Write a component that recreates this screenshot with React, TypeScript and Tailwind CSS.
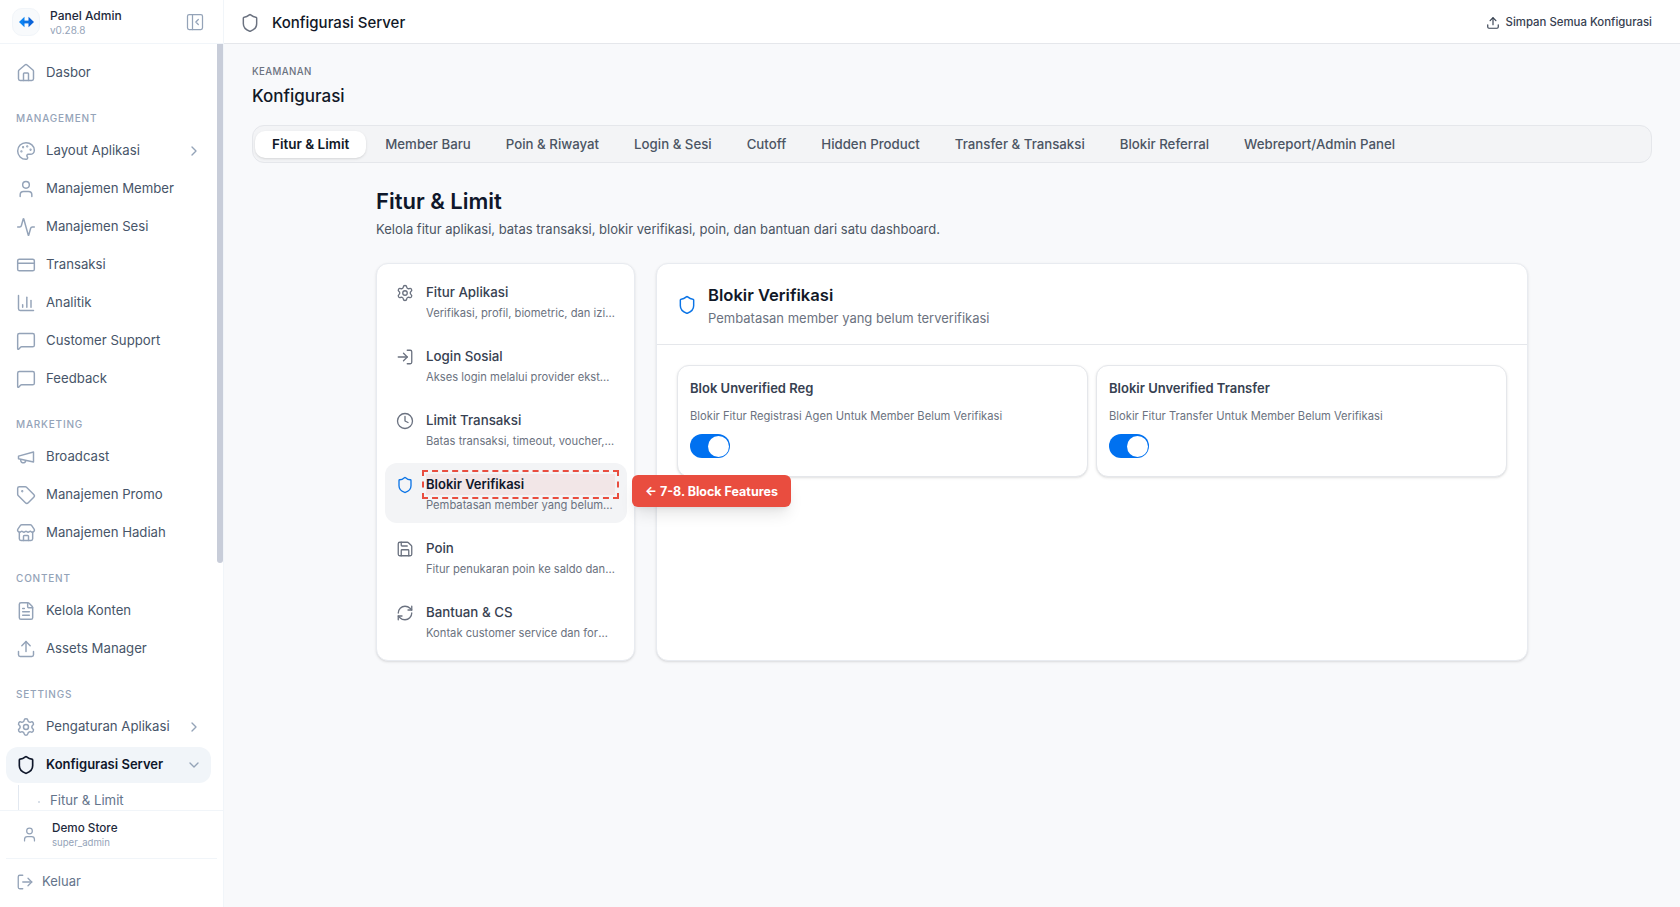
import {
  Activity,
  ChartColumn,
  ChevronDown,
  ChevronRight,
  Clock,
  CreditCard,
  FileText,
  House,
  LogIn,
  LogOut,
  MessageSquare,
  Palette,
  PanelLeftClose,
  RefreshCw,
  Save,
  Settings,
  Shield,
  Store,
  Tag,
  Upload,
  User,
} from "lucide-react";

const font = { fontFamily: "Inter, 'Noto Sans', sans-serif" };

function Megaphone({ size = 20, strokeWidth = 2, className }: { size?: number; strokeWidth?: number; className?: string }) {
  return (
    <svg width={size} height={size} viewBox="0 0 24 24" fill="none" stroke="currentColor" strokeWidth={strokeWidth} strokeLinecap="round" strokeLinejoin="round" className={className}>
      <path d="m3 11 18-5v12L3 14v-3z" />
      <path d="M11.6 16.8a3 3 0 1 1-5.8-1.6" />
    </svg>
  );
}

function NavItem({ icon: Icon, label, chevron }: { icon: any; label: string; chevron?: boolean }) {
  return (
    <div className="flex h-9 items-center gap-[10px] rounded-xl pl-[10px] pr-[9px] text-[13.2px] text-[#475569]">
      <Icon size={20} strokeWidth={1.75} className="shrink-0 text-[#94a3b8]" />
      <span className="flex-1 truncate">{label}</span>
      {chevron && <ChevronRight size={16} className="text-[#94a3b8]" />}
    </div>
  );
}

function NavSection({ title, children }: { title: string; children: React.ReactNode }) {
  return (
    <div className="pt-[19px]">
      <div className="mb-[7px] flex h-4 items-center px-[10px] text-[10px] font-medium tracking-[0.08em] text-[#94a3b8]">{title}</div>
      <div className="flex flex-col gap-[2px]">{children}</div>
    </div>
  );
}

function Sidebar() {
  return (
    <aside className="flex h-full w-[224px] shrink-0 flex-col border-r border-[#f1f5f9] bg-white">
      <div className="flex h-[44px] shrink-0 items-center border-b border-[#f1f5f9] pl-[12px] pr-[18px] pt-[1px]">
        <div className="flex h-7 w-7 items-center justify-center rounded-[10px] border border-[#f1f5f9] bg-[#f8fafc]">
          <svg width="15" height="12" viewBox="0 0 15 12" fill="none">
            <path d="M0 6 L5.5 0.8 V11.2 Z" fill="#0b84f3" />
            <path d="M15 6 L9.5 0.8 V11.2 Z" fill="#0b63d8" />
            <rect x="4" y="4.6" width="7" height="2.8" fill="#0b74e6" />
          </svg>
        </div>
        <div className="ml-[10px] flex-1 pt-[2px] leading-none">
          <div className="text-[12px] font-medium leading-[14px] text-[#1e293b]">Panel Admin</div>
          <div className="text-[10px] leading-[14px] text-[#94a3b8]">v0.28.8</div>
        </div>
        <PanelLeftClose size={20} strokeWidth={1.5} className="text-[#94a3b8]" />
      </div>

      <div className="relative min-h-0 flex-1 overflow-hidden">
        <div className="px-[6px] pt-[11px] pr-[12px]">
          <NavItem icon={House} label="Dasbor" />
          <NavSection title="MANAGEMENT">
            <NavItem icon={Palette} label="Layout Aplikasi" chevron />
            <NavItem icon={User} label="Manajemen Member" />
            <NavItem icon={Activity} label="Manajemen Sesi" />
            <NavItem icon={CreditCard} label="Transaksi" />
            <NavItem icon={ChartColumn} label="Analitik" />
            <NavItem icon={MessageSquare} label="Customer Support" />
            <NavItem icon={MessageSquare} label="Feedback" />
          </NavSection>
          <NavSection title="MARKETING">
            <NavItem icon={Megaphone} label="Broadcast" />
            <NavItem icon={Tag} label="Manajemen Promo" />
            <NavItem icon={Store} label="Manajemen Hadiah" />
          </NavSection>
          <NavSection title="CONTENT">
            <NavItem icon={FileText} label="Kelola Konten" />
            <NavItem icon={Upload} label="Assets Manager" />
          </NavSection>
          <NavSection title="SETTINGS">
            <NavItem icon={Settings} label="Pengaturan Aplikasi" chevron />
            <div className="flex h-9 items-center gap-[10px] rounded-xl bg-[#f1f5f9] pl-[10px] pr-[9px] text-[13px] font-semibold text-[#0f172a]">
              <Shield size={20} strokeWidth={2} className="shrink-0" />
              <span className="flex-1 truncate">Konfigurasi Server</span>
              <ChevronDown size={16} className="text-[#94a3b8]" />
            </div>
            <div className="ml-[12px] flex h-[32px] items-center border-l border-[#e2e8f0] pl-[31px] text-[13.2px] text-[#64748b]">
              <span className="relative">
                <span className="absolute -left-[12px] top-1/2 h-[2px] w-[2px] rounded-full bg-[#cbd5e1]" />
                Fitur &amp; Limit
              </span>
            </div>
          </NavSection>
        </div>
        <div className="absolute right-0 top-0 h-[519px] w-[6px] rounded-b-full bg-[#c8cdd9]" />
      </div>

      <div className="shrink-0 border-t border-[#f1f5f9] bg-white pb-[3px]">
        <div className="flex h-[47px] items-center pl-[21px]">
          <User size={17} strokeWidth={1.75} className="text-[#94a3b8]" />
          <div className="ml-[14px]">
            <div className="text-[11.7px] font-medium leading-[16px] text-[#1e293b]">Demo Store</div>
            <div className="text-[9.6px] leading-[14px] text-[#94a3b8]">super_admin</div>
          </div>
        </div>
        <div className="mx-[6px] flex h-[46px] items-center gap-[8px] border-t border-[#f1f5f9] pl-[10px] text-[13px] text-[#64748b]">
          <LogOut size={18} strokeWidth={1.75} className="text-[#94a3b8]" />
          Keluar
        </div>
      </div>
    </aside>
  );
}

const tabs = ["Member Baru", "Poin & Riwayat", "Login & Sesi", "Cutoff", "Hidden Product", "Transfer & Transaksi", "Blokir Referral", "Webreport/Admin Panel"];

const menu = [
  { icon: Settings, title: "Fitur Aplikasi", sub: "Verifikasi, profil, biometric, dan izin aplikasi" },
  { icon: LogIn, title: "Login Sosial", sub: "Akses login melalui provider eksternal" },
  { icon: Clock, title: "Limit Transaksi", sub: "Batas transaksi, timeout, voucher, dan lainnya" },
  { icon: Shield, title: "Blokir Verifikasi", sub: "Pembatasan member yang belum terverifikasi", active: true },
  { icon: Save, title: "Poin", sub: "Fitur penukaran poin ke saldo dan lainnya" },
  { icon: RefreshCw, title: "Bantuan & CS", sub: "Kontak customer service dan formulir bantuan" },
];

function MenuCard() {
  return (
    <div className="flex w-[259px] shrink-0 flex-col gap-1 rounded-xl border border-[#e8ebf0] bg-white pt-[7px] pb-[9px] pl-2 pr-[7px] shadow-sm">
      {menu.map((m) => (
        <div key={m.title} className={`flex h-[60px] gap-[12px] rounded-xl pl-[11px] pr-[12px] ${m.active ? "bg-[#f3f4f6]" : ""}`}>
          <m.icon size={18} strokeWidth={1.75} className={`mt-[13px] shrink-0 ${m.active ? "text-[#0b74e6]" : "text-[#6b7280]"}`} />
          <div className="min-w-0 flex-1 pt-[11px]">
            {m.active ? (
              <div className="relative h-[21px] bg-[#e94d3f]/8 text-[13px] font-semibold leading-[21px] text-[#0f172a] outline-2 outline-offset-2 outline-[#e94d3f] outline-dashed">
                {m.title}
                <div className="absolute left-full top-[1px] z-10 ml-[17px] flex h-8 w-[159px] items-center rounded-md bg-[#e94d3f] pl-[13px] text-[12.5px] font-bold whitespace-nowrap text-white shadow-lg">
                  ← 7-8. Block Features
                </div>
              </div>
            ) : (
              <div className="h-[21px] text-[13.3px] font-medium leading-[21px] text-[#374151]">{m.title}</div>
            )}
            <div className="mt-[1px] truncate text-[11.2px] leading-[18px] text-[#6b7280]">{m.sub}</div>
          </div>
        </div>
      ))}
    </div>
  );
}

function Toggle() {
  return (
    <div className="flex h-6 w-10 items-center justify-end rounded-full bg-[#0071f0] pr-[1px]">
      <div className="h-[21px] w-[21px] rounded-full bg-white" />
    </div>
  );
}

function BlockCard({ title, desc }: { title: string; desc: string }) {
  return (
    <div className="h-[112px] rounded-xl border border-[#e5e7eb] bg-white px-3 pt-[12px] shadow-sm">
      <div className="text-[13px] font-semibold leading-5 text-[#374151]">{title}</div>
      <div className="mt-[10px] text-[11.2px] leading-4 text-[#6b7280]">{desc}</div>
      <div className="mt-[10px]">
        <Toggle />
      </div>
    </div>
  );
}

export default function App() {
  return (
    <div className="flex h-screen overflow-hidden bg-[#f8f9fb]" style={font}>
      <Sidebar />
      <div className="flex min-w-0 flex-1 flex-col">
        <header className="flex h-[44px] shrink-0 items-center border-b border-[#e5e7eb] bg-white pl-[16px] pr-[28px] pt-[3px]">
          <Shield size={20} strokeWidth={1.75} className="text-[#6b7280]" />
          <h2 className="ml-[12px] flex-1 text-[15px] font-medium leading-[24px] text-[#111827]">Konfigurasi Server</h2>
          <Upload size={14} strokeWidth={2} className="text-[#374151]" />
          <span className="ml-[6px] text-[11.4px] font-medium text-[#374151]">Simpan Semua Konfigurasi</span>
        </header>

        <main className="min-h-0 flex-1 px-[28px] pt-[20px]">
          <div className="text-[9.7px] font-medium leading-4 tracking-[0.04em] text-[#6b7280]">KEAMANAN</div>
          <h1 className="mt-[4px] text-[17px] font-medium leading-6 text-[#111827]">Konfigurasi</h1>

          <div className="mt-[17px] flex h-[38px] items-center gap-[3px] rounded-xl border border-[#e5e7eb] bg-[#f3f4f6] px-[2px]">
            <div className="flex h-[27px] items-center rounded-[10px] bg-white px-[17px] text-[13.5px] font-semibold text-[#111827] shadow-sm">Fitur &amp; Limit</div>
            {tabs.map((t) => (
              <div key={t} className="flex h-[27px] items-center px-4 pt-[1px] text-[13.25px] font-medium text-[#4b5563]">{t}</div>
            ))}
          </div>

          <div className="ml-[124px] w-[1152px]">
            <h1 className="mt-[22px] text-[22px] font-semibold leading-8 text-[#0f172a]">Fitur &amp; Limit</h1>
            <p className="mt-[2px] text-[13px] leading-5 text-[#4b5563]">Kelola fitur aplikasi, batas transaksi, blokir verifikasi, poin, dan bantuan dari satu dashboard.</p>

            <div className="mt-[24px] flex gap-[21px]">
              <MenuCard />
              <div className="h-[398px] flex-1 rounded-xl border border-[#e8ebf0] bg-white shadow-sm">
                <div className="flex h-[81px] items-center gap-[11px] border-b border-[#e5e7eb] pl-[20px] pt-[2px]">
                  <Shield size={20} strokeWidth={1.75} className="text-[#0b74e6]" />
                  <div>
                    <div className="text-[16.6px] font-semibold leading-6 text-[#111827]">Blokir Verifikasi</div>
                    <div className="mt-[1px] text-[13px] leading-5 text-[#6b7280]">Pembatasan member yang belum terverifikasi</div>
                  </div>
                </div>
                <div className="grid grid-cols-2 gap-2 px-5 pt-5">
                  <BlockCard title="Blok Unverified Reg" desc="Blokir Fitur Registrasi Agen Untuk Member Belum Verifikasi" />
                  <BlockCard title="Blokir Unverified Transfer" desc="Blokir Fitur Transfer Untuk Member Belum Verifikasi" />
                </div>
              </div>
            </div>
          </div>
        </main>
      </div>
    </div>
  );
}
